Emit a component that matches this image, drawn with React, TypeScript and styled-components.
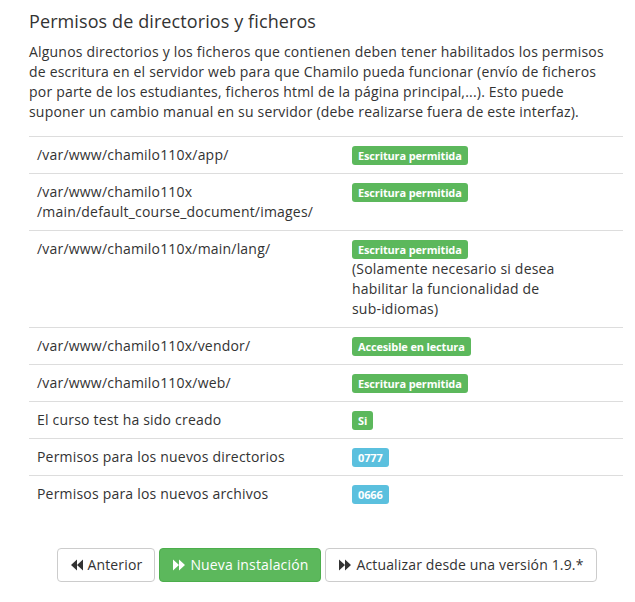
import React from "react";
import styled, { createGlobalStyle } from "styled-components";

const Global = createGlobalStyle`
  html, body { margin: 0; padding: 0; background: #fff; }
  body {
    font-family: "Open Sans", "Noto Sans", sans-serif;
    font-size: 14px;
    line-height: 20px;
    color: #333;
    letter-spacing: 0.2px;
  }
`;

const Page = styled.div`
  padding: 12px 12px 0 29px;
  width: 594px;
`;

const Title = styled.h4`
  margin: 0 0 10px;
  font-size: 18px;
  font-weight: 400;
  line-height: 19.8px;
  color: #333;
  letter-spacing: 0.1px;
`;

const Intro = styled.p`
  margin: 0 0 14px;
  max-width: 588px;
`;

const Table = styled.table`
  width: 594px;
  border-collapse: collapse;
  border-spacing: 0;
  margin-bottom: 36px;
`;

const Row = styled.tr``;

const PathCell = styled.td`
  width: 299px;
  padding: 8px;
  vertical-align: top;
  border-top: 1px solid #ddd;
  line-height: 20px;
`;

const StatusCell = styled.td`
  padding: 8px;
  vertical-align: top;
  border-top: 1px solid #ddd;
  line-height: 20px;
`;

const Note = styled.div`
  width: 212px;
`;

const Badge = styled.span<{ $tone: "success" | "info" }>`
  display: inline-block;
  margin-top: 1px;
  padding: 3px 6px;
  font-size: 11px;
  font-weight: 700;
  line-height: 13px;
  color: #fff;
  border-radius: 3px;
  vertical-align: top;
  letter-spacing: -0.15px;
  background: ${(p) => (p.$tone === "success" ? "#5cb85c" : "#5bc0de")};
`;

const Actions = styled.div`
  display: flex;
  justify-content: center;
  gap: 4px;
  padding-left: 2px;
`;

const Button = styled.button<{ $primary?: boolean }>`
  display: inline-flex;
  align-items: center;
  height: 34px;
  padding: 6px 12px;
  font-family: "Open Sans", "Noto Sans", sans-serif;
  font-size: 14px;
  line-height: 20px;
  letter-spacing: 0.15px;
  border-radius: 4px;
  border: 1px solid ${(p) => (p.$primary ? "#4cae4c" : "#ccc")};
  background: ${(p) => (p.$primary ? "#5cb85c" : "#fff")};
  color: ${(p) => (p.$primary ? "#fff" : "#333")};
  cursor: pointer;
`;

const Icon = styled.svg<{ $gap: number }>`
  margin-right: ${(p) => p.$gap}px;
  flex: none;
`;

const Arrows = ({ dir, gap }: { dir: "back" | "fwd"; gap: number }) => (
  <Icon $gap={gap} width="14" height="12" viewBox="0 0 14 12" aria-hidden="true">
    {dir === "fwd" ? (
      <path d="M1 0.5 L7 6 L1 11.5 Z M7 0.5 L13 6 L7 11.5 Z" fill="currentColor" />
    ) : (
      <path d="M13 0.5 L7 6 L13 11.5 Z M7 0.5 L1 6 L7 11.5 Z" fill="currentColor" />
    )}
  </Icon>
);

type Item = {
  path: React.ReactNode;
  label: string;
  tone: "success" | "info";
  note?: string;
};

const items: Item[] = [
  { path: "/var/www/chamilo110x/app/", label: "Escritura permitida", tone: "success" },
  {
    path: (
      <>
        /var/www/chamilo110x
        <br />
        /main/default_course_document/images/
      </>
    ),
    label: "Escritura permitida",
    tone: "success",
  },
  {
    path: "/var/www/chamilo110x/main/lang/",
    label: "Escritura permitida",
    tone: "success",
    note: "(Solamente necesario si desea habilitar la funcionalidad de sub-idiomas)",
  },
  { path: "/var/www/chamilo110x/vendor/", label: "Accesible en lectura", tone: "success" },
  { path: "/var/www/chamilo110x/web/", label: "Escritura permitida", tone: "success" },
  { path: "El curso test ha sido creado", label: "Si", tone: "success" },
  { path: "Permisos para los nuevos directorios", label: "0777", tone: "info" },
  { path: "Permisos para los nuevos archivos", label: "0666", tone: "info" },
];

export default function App() {
  return (
    <>
      <Global />
      <Page>
        <Title>Permisos de directorios y ficheros</Title>
        <Intro>
          Algunos directorios y los ficheros que contienen deben tener habilitados los permisos
          de escritura en el servidor web para que Chamilo pueda funcionar (envío de ficheros
          por parte de los estudiantes, ficheros html de la página principal,...). Esto puede
          suponer un cambio manual en su servidor (debe realizarse fuera de este interfaz).
        </Intro>
        <Table>
          <tbody>
            {items.map((it, i) => (
              <Row key={i}>
                <PathCell>{it.path}</PathCell>
                <StatusCell>
                  <Badge $tone={it.tone}>{it.label}</Badge>
                  {it.note && <Note>{it.note}</Note>}
                </StatusCell>
              </Row>
            ))}
          </tbody>
        </Table>
        <Actions>
          <Button>
            <Arrows dir="back" gap={3} />
            Anterior
          </Button>
          <Button $primary>
            <Arrows dir="fwd" gap={4} />
            Nueva instalación
          </Button>
          <Button>
            <Arrows dir="fwd" gap={4} />
            Actualizar desde una versión 1.9.*
          </Button>
        </Actions>
      </Page>
    </>
  );
}
